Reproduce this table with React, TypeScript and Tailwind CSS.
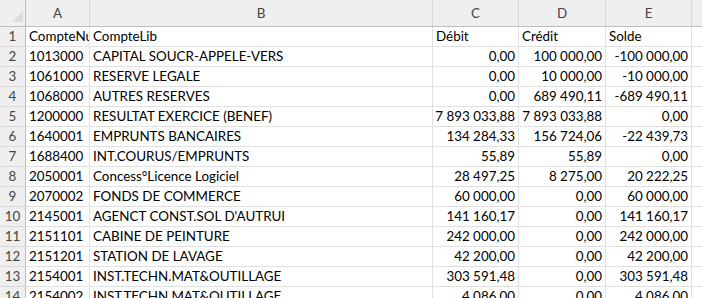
const cols = [
  { key: "A", w: "w-[64px]" },
  { key: "B", w: "w-[343px]" },
  { key: "C", w: "w-[86px]" },
  { key: "D", w: "w-[87px]" },
  { key: "E", w: "w-[86px]" },
];

type Row = [string, string, string, string, string];

const rows: Row[] = [
  ["1013000", "CAPITAL SOUCR-APPELE-VERS", "0,00", "100 000,00", "-100 000,00"],
  ["1061000", "RESERVE LEGALE", "0,00", "10 000,00", "-10 000,00"],
  ["1068000", "AUTRES RESERVES", "0,00", "689 490,11", "-689 490,11"],
  ["1200000", "RESULTAT EXERCICE (BENEF)", "7 893 033,88", "7 893 033,88", "0,00"],
  ["1640001", "EMPRUNTS BANCAIRES", "134 284,33", "156 724,06", "-22 439,73"],
  ["1688400", "INT.COURUS/EMPRUNTS", "55,89", "55,89", "0,00"],
  ["2050001", "Concess°Licence Logiciel", "28 497,25", "8 275,00", "20 222,25"],
  ["2070002", "FONDS DE COMMERCE", "60 000,00", "0,00", "60 000,00"],
  ["2145001", "AGENCT CONST.SOL D'AUTRUI", "141 160,17", "0,00", "141 160,17"],
  ["2151101", "CABINE DE PEINTURE", "242 000,00", "0,00", "242 000,00"],
  ["2151201", "STATION DE LAVAGE", "42 200,00", "0,00", "42 200,00"],
  ["2154001", "INST.TECHN.MAT&OUTILLAGE", "303 591,48", "0,00", "303 591,48"],
  ["2154002", "INST.TECHN.MAT&OUTILLAGE", "4 086,00", "0,00", "4 086,00"],
];

export default function App() {
  return (
    <div className="w-[702px] h-[298px] overflow-hidden bg-white text-[13.4px] leading-none font-['Lato','Liberation_Sans',sans-serif] text-black">
      {/* header row */}
      <div className="flex h-[27px] bg-[#efefef] border-b border-[#bdbdbd]">
        <div className="relative w-[26px] shrink-0 border-r border-[#bdbdbd]">
          <svg className="absolute left-[12px] top-[11px]" width="11" height="11" viewBox="0 0 11 11">
            <polygon points="11,0 11,11 0,11" fill="#dcdcdc" />
          </svg>
        </div>
        {cols.map((c) => (
          <div
            key={c.key}
            className={`${c.w} shrink-0 border-r border-[#d9d9d9] flex items-center justify-center text-[#444] pt-[1px]`}
          >
            {c.key}
          </div>
        ))}
        <div className="flex-1" />
      </div>

      <DataRow
        n={1}
        cells={["CompteNum", "CompteLib", "Débit", "Crédit", "Solde"]}
        header
      />
      {rows.map((r, i) => (
        <DataRow key={i} n={i + 2} cells={r} />
      ))}
    </div>
  );
}

function DataRow({ n, cells, header }: { n: number; cells: string[]; header?: boolean }) {
  return (
    <div className="flex h-[20px]">
      <div className="w-[26px] shrink-0 bg-[#efefef] border-r border-b border-[#bdbdbd] border-b-[#d9d9d9] flex items-center justify-center text-[#444] pt-[1px]">
        {n}
      </div>
      {cells.map((t, j) => {
        const right = !header && j >= 2;
        return (
          <div
            key={j}
            className={`${cols[j].w} shrink-0 overflow-hidden whitespace-nowrap border-r border-b border-[#e1e1e1] flex items-center pt-[1px] ${
              right ? "justify-end pr-[3px]" : "justify-start pl-[3px]"
            }`}
          >
            {t}
          </div>
        );
      })}
      <div className="flex-1 border-b border-[#e1e1e1]" />
    </div>
  );
}
